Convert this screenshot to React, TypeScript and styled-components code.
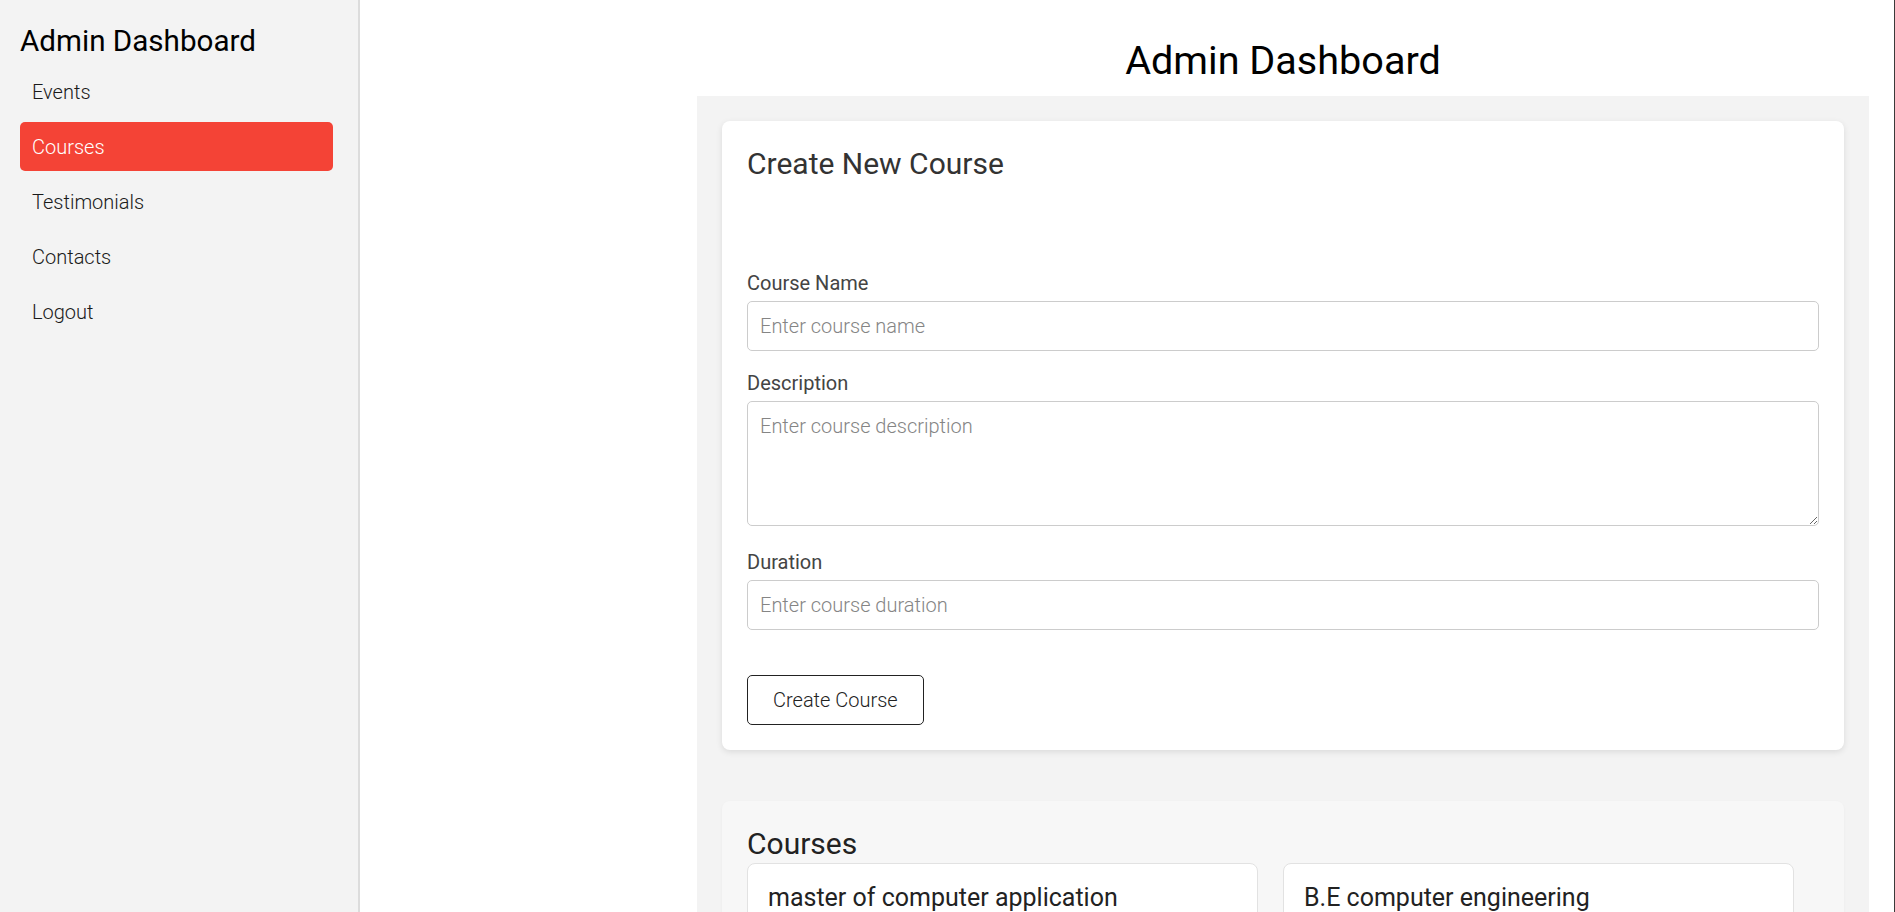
import React from "react";
import styled, { createGlobalStyle } from "styled-components";

const GlobalStyle = createGlobalStyle`
  *, *::before, *::after { box-sizing: border-box; }
  html, body { margin: 0; padding: 0; overflow: hidden; }
  body {
    font-family: Roboto, "Liberation Sans", Arial, sans-serif;
    background: #ffffff;
    color: #222;
  }
`;

const Shell = styled.div`
  display: flex;
  height: 100vh;
  overflow: hidden;
  border-right: 1px solid #3a3a3a;
`;

const Sidebar = styled.aside`
  flex: 0 0 360px;
  width: 360px;
  height: 100%;
  background: #f3f3f3;
  border-right: 2px solid #dcdcdc;
  padding: 24px 25px 20px 20px;
`;

const SideTitle = styled.h2`
  margin: 0 0 8px;
  font-size: 29.6px;
  font-weight: 400;
  line-height: 35px;
  color: #000;
`;

const NavList = styled.ul`
  list-style: none;
  margin: 0;
  padding: 0;
  display: flex;
  flex-direction: column;
  gap: 6px;
`;

const NavItem = styled.li<{ $active?: boolean }>`
  height: 49px;
  display: flex;
  align-items: center;
  padding: 0 12px;
  border-radius: 5px;
  font-size: 20px;
  font-weight: 300;
  color: ${(p) => (p.$active ? "#ffffff" : "#1a1a1a")};
  background: ${(p) => (p.$active ? "#f44336" : "transparent")};
  cursor: pointer;
`;

const Main = styled.main`
  flex: 1;
  min-width: 0;
  height: 100%;
  padding: 0 25px 0 337px;
`;

const PageTitle = styled.h1`
  margin: 37px 0 11px;
  font-size: 39.6px;
  line-height: 48px;
  font-weight: 400;
  text-align: center;
  color: #000;
`;

const Content = styled.div`
  background: #f3f3f3;
  padding: 25px;
  min-height: 1000px;
`;

const FormCard = styled.section`
  background: #ffffff;
  border-radius: 8px;
  box-shadow: 0 2px 6px rgba(0, 0, 0, 0.1);
  padding: 25px;
`;

const CardTitle = styled.h2`
  margin: 0 0 89px;
  font-size: 30px;
  line-height: 36px;
  font-weight: 400;
  color: #333;
`;

const Field = styled.div<{ $gap?: number }>`
  margin-bottom: ${(p) => p.$gap ?? 20}px;
`;

const Label = styled.label`
  display: block;
  font-size: 20px;
  line-height: 24px;
  font-weight: 400;
  color: #444;
  margin-bottom: 6px;
`;

const TextInput = styled.input`
  display: block;
  width: 100%;
  height: 50px;
  padding: 12px;
  font-family: inherit;
  font-size: 20px;
  font-weight: 300;
  line-height: 24px;
  color: #222;
  border: 1px solid #cccccc;
  border-radius: 5px;
  background: #fff;
  outline: none;
  &::placeholder { color: #858585; }
`;

const TextArea = styled.textarea`
  display: block;
  width: 100%;
  height: 125px;
  padding: 12px;
  font-family: inherit;
  font-size: 20px;
  font-weight: 300;
  line-height: 24px;
  color: #222;
  border: 1px solid #cccccc;
  border-radius: 5px;
  background: #fff;
  outline: none;
  resize: both;
  &::placeholder { color: #858585; }
`;

const SubmitButton = styled.button`
  margin-top: 25px;
  height: 50px;
  padding: 0 25px;
  font-family: inherit;
  font-size: 20px;
  font-weight: 300;
  color: #222;
  background: #ffffff;
  border: 1px solid #222;
  border-radius: 5px;
  cursor: pointer;
`;

const ListSection = styled.section`
  margin-top: 51px;
  background: #f7f7f7;
  border-radius: 8px;
  box-shadow: 0 1px 3px rgba(0, 0, 0, 0.04);
  padding: 25px;
`;

const SectionTitle = styled.h2`
  margin: 0 0 1px;
  font-size: 30px;
  line-height: 36px;
  font-weight: 400;
  color: #222;
`;

const CourseGrid = styled.div`
  display: grid;
  grid-template-columns: repeat(2, 511px);
  gap: 25px;
`;

const CourseCard = styled.article`
  background: #ffffff;
  border: 1px solid #e2e2e2;
  border-radius: 8px;
  padding: 19px 20px 20px;
  min-height: 160px;
`;

const CourseName = styled.h3`
  margin: 0;
  font-size: 25px;
  line-height: 30px;
  font-weight: 400;
  color: #222;
`;

const navItems = ["Events", "Courses", "Testimonials", "Contacts", "Logout"];
const courses = ["master of computer application", "B.E computer engineering"];

export default function App() {
  return (
    <>
      <GlobalStyle />
      <Shell>
        <Sidebar>
          <SideTitle>Admin Dashboard</SideTitle>
          <NavList>
            {navItems.map((item) => (
              <NavItem key={item} $active={item === "Courses"}>
                {item}
              </NavItem>
            ))}
          </NavList>
        </Sidebar>
        <Main>
          <PageTitle>Admin Dashboard</PageTitle>
          <Content>
            <FormCard>
              <CardTitle>Create New Course</CardTitle>
              <Field>
                <Label>Course Name</Label>
                <TextInput placeholder="Enter course name" />
              </Field>
              <Field $gap={24}>
                <Label>Description</Label>
                <TextArea placeholder="Enter course description" />
              </Field>
              <Field>
                <Label>Duration</Label>
                <TextInput placeholder="Enter course duration" />
              </Field>
              <SubmitButton>Create Course</SubmitButton>
            </FormCard>
            <ListSection>
              <SectionTitle>Courses</SectionTitle>
              <CourseGrid>
                {courses.map((c) => (
                  <CourseCard key={c}>
                    <CourseName>{c}</CourseName>
                  </CourseCard>
                ))}
              </CourseGrid>
            </ListSection>
          </Content>
        </Main>
      </Shell>
    </>
  );
}
